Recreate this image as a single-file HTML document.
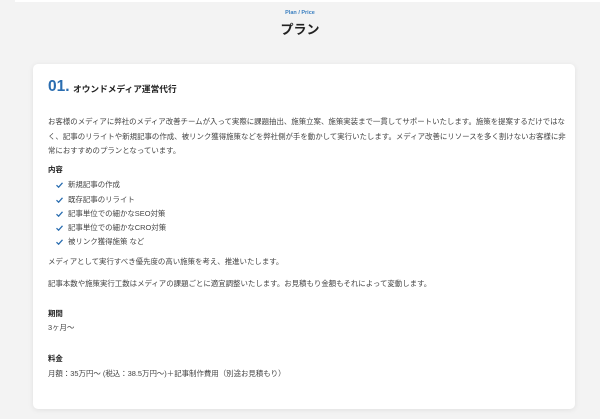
<!DOCTYPE html>
<html><head><meta charset="utf-8"><style>
*{margin:0;padding:0;box-sizing:border-box}
body{width:600px;height:419px;background:#f3f3f3;font-family:"Liberation Sans","Noto Sans CJK JP",sans-serif;color:#333;position:relative;overflow:hidden}
.topbar{position:absolute;left:15px;top:0;width:585px;height:2px;background:#fff}
.sub{position:absolute;top:10px;width:600px;text-align:center;font-size:5.5px;font-weight:bold;color:#3a7fc0}
.h{position:absolute;top:19px;width:600px;text-align:center;font-size:13px;font-weight:bold;color:#222}
.card{position:absolute;left:33px;top:64px;width:542px;height:345px;background:#fff;border-radius:5px;box-shadow:0 1px 6px rgba(0,0,0,.08)}
.t{position:absolute;left:48px;font-size:7.43px;line-height:10px;white-space:nowrap;color:#444}
.b{font-weight:bold;color:#222}
.num{position:absolute;left:48px;top:78px;font-size:15.5px;font-weight:bold;color:#2a6db0}
.ck{position:absolute;left:56px;width:7px;height:6px}
</style></head><body>
<div class="topbar"></div>
<div class="sub">Plan / Price</div>
<div class="h">プラン</div>
<div class="card"></div>
<div class="num">01.</div>
<div class="t b" style="left:73px;top:84px;font-size:8.7px">オウンドメディア運営代行</div>
<div class="t" style="top:117px">お客様のメディアに弊社のメディア改善チームが入って実際に課題抽出、施策立案、施策実装まで一貫してサポートいたします。施策を提案するだけではな</div>
<div class="t" style="top:132px">く、記事のリライトや新規記事の作成、被リンク獲得施策などを弊社側が手を動かして実行いたします。メディア改善にリソースを多く割けないお客様に非</div>
<div class="t" style="top:146px">常におすすめのプランとなっています。</div>
<div class="t b" style="top:165px">内容</div>
<svg class="ck" style="top:182px" viewBox="0 0 7 6"><path d="M0.5 3.2L2.6 5.2L6.5 0.8" stroke="#2a6db0" stroke-width="1.3" fill="none"/></svg>
<div class="t" style="left:68px;top:180px">新規記事の作成</div>
<svg class="ck" style="top:197px" viewBox="0 0 7 6"><path d="M0.5 3.2L2.6 5.2L6.5 0.8" stroke="#2a6db0" stroke-width="1.3" fill="none"/></svg>
<div class="t" style="left:68px;top:195px">既存記事のリライト</div>
<svg class="ck" style="top:211px" viewBox="0 0 7 6"><path d="M0.5 3.2L2.6 5.2L6.5 0.8" stroke="#2a6db0" stroke-width="1.3" fill="none"/></svg>
<div class="t" style="left:68px;top:209px">記事単位での細かなSEO対策</div>
<svg class="ck" style="top:225px" viewBox="0 0 7 6"><path d="M0.5 3.2L2.6 5.2L6.5 0.8" stroke="#2a6db0" stroke-width="1.3" fill="none"/></svg>
<div class="t" style="left:68px;top:223px">記事単位での細かなCRO対策</div>
<svg class="ck" style="top:239px" viewBox="0 0 7 6"><path d="M0.5 3.2L2.6 5.2L6.5 0.8" stroke="#2a6db0" stroke-width="1.3" fill="none"/></svg>
<div class="t" style="left:68px;top:237px">被リンク獲得施策 など</div>
<div class="t" style="top:257px">メディアとして実行すべき優先度の高い施策を考え、推進いたします。</div>
<div class="t" style="top:279px">記事本数や施策実行工数はメディアの課題ごとに適宜調整いたします。お見積もり金額もそれによって変動します。</div>
<div class="t b" style="top:309px">期間</div>
<div class="t" style="top:323px">3ヶ月〜</div>
<div class="t b" style="top:354px">料金</div>
<div class="t" style="top:369px">月額：35万円〜 (税込：38.5万円〜)＋記事制作費用（別途お見積もり）</div>
</body></html>
